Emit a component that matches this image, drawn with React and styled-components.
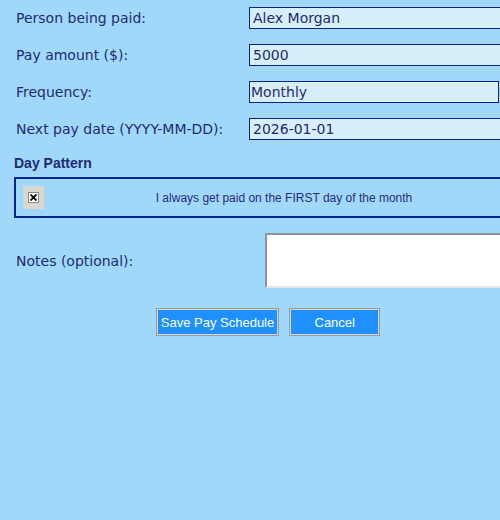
import React, { useState } from 'react';
import styled, { createGlobalStyle } from 'styled-components';

const GlobalStyle = createGlobalStyle`
  html, body {
    margin: 0;
    padding: 0;
    background: #a0d8fb;
    overflow: hidden;
  }
  body {
    width: 500px;
    height: 520px;
    font-family: "DejaVu Sans", sans-serif;
  }
`;

const Form = styled.form`
  width: 520px;
  margin-left: 8px;
  padding: 7px 6px 0 6px;
  box-sizing: border-box;
  display: flex;
  flex-direction: column;
`;

const Row = styled.div`
  display: grid;
  grid-template-columns: ${(p) => p.labelWidth || 235}px 1fr;
  align-items: center;
  margin-bottom: ${(p) => p.gap ?? 15}px;
`;

const Label = styled.label`
  padding-left: 2px;
  font-family: "DejaVu Sans", sans-serif;
  font-size: 14px;
  color: #1f2a72;
`;

const TextInput = styled.input`
  box-sizing: border-box;
  width: 100%;
  height: 22px;
  margin: 0;
  padding: 0 3px;
  border: 1px solid #0b2590;
  background: #d6effb;
  color: #1f2a72;
  font-family: "DejaVu Sans", sans-serif;
  font-size: 14px;
  outline: none;
`;

const Select = styled.select`
  box-sizing: border-box;
  width: 250px;
  height: 22px;
  margin: 0;
  padding: 0 1px;
  border: 1px solid #0b2590;
  background: #d6effb;
  color: #1f2a72;
  font-family: "DejaVu Sans", sans-serif;
  font-size: 14px;
  appearance: none;
  border-radius: 0;
  outline: none;
`;

const Heading = styled.h3`
  margin: 0 0 5px 0;
  font-family: "Liberation Sans", Arial, sans-serif;
  font-weight: bold;
  font-size: 14px;
  line-height: 18px;
  color: #1f2a72;
`;

const PatternBox = styled.div`
  display: flex;
  align-items: center;
  border: 2px solid #0b2590;
  padding: 7px 0;
  margin-bottom: 15px;
`;

const CheckWrap = styled.span`
  display: flex;
  align-items: center;
  justify-content: center;
  width: 21px;
  height: 23px;
  margin-left: 7px;
  margin-right: 4px;
  background: #d8d7d0;
  cursor: pointer;
`;

const CheckMark = styled.span`
  box-sizing: border-box;
  width: 11px;
  height: 11px;
  border: 1px solid #8a8a8a;
  background: #fff;
  display: flex;
  align-items: center;
  justify-content: center;
`;

const PatternText = styled.span`
  flex: 1;
  text-align: center;
  font-family: "Liberation Sans", Arial, sans-serif;
  font-size: 12px;
  color: #2a2a7a;
`;

const Notes = styled.textarea`
  box-sizing: border-box;
  width: 100%;
  height: 55px;
  margin: 0;
  border: 2px solid #e4e4e4;
  border-top-color: #929292;
  border-left-color: #929292;
  background: #fff;
  resize: none;
  outline: none;
`;

const Buttons = styled.div`
  display: flex;
  justify-content: center;
  gap: 10px;
  margin-top: 20px;
`;

const Button = styled.button`
  box-sizing: border-box;
  min-width: ${(p) => p.minWidth || 0}px;
  height: 28px;
  padding: 0 4px;
  border: 1px solid #9c9c9c;
  box-shadow: inset 0 0 0 1px #d4d4d4;
  background: #1e90ff;
  color: #fff;
  font-family: "Liberation Sans", Arial, sans-serif;
  font-size: 13px;
  cursor: pointer;
`;

export default function App() {
  const [firstDay, setFirstDay] = useState(true);

  return (
    <>
      <GlobalStyle />
      <Form onSubmit={(e) => e.preventDefault()}>
        <Row>
          <Label>Person being paid:</Label>
          <TextInput defaultValue="Alex Morgan" />
        </Row>
        <Row>
          <Label>Pay amount ($):</Label>
          <TextInput defaultValue="5000" />
        </Row>
        <Row>
          <Label>Frequency:</Label>
          <Select defaultValue="monthly">
            <option value="weekly">Weekly</option>
            <option value="biweekly">Biweekly</option>
            <option value="monthly">Monthly</option>
          </Select>
        </Row>
        <Row gap={14}>
          <Label>Next pay date (YYYY-MM-DD):</Label>
          <TextInput defaultValue="2026-01-01" />
        </Row>

        <Heading>Day Pattern</Heading>
        <PatternBox>
          <CheckWrap onClick={() => setFirstDay(!firstDay)}>
            <CheckMark>
              {firstDay ? (
                <svg width="7" height="7" viewBox="0 0 7 7">
                  <path d="M0.5 0.5 L6.5 6.5 M6.5 0.5 L0.5 6.5" stroke="#000" strokeWidth="1.8" />
                </svg>
              ) : null}
            </CheckMark>
          </CheckWrap>
          <PatternText>I always get paid on the FIRST day of the month</PatternText>
        </PatternBox>

        <Row labelWidth={251} gap={0}>
          <Label>Notes (optional):</Label>
          <Notes />
        </Row>

        <Buttons>
          <Button type="submit">Save Pay Schedule</Button>
          <Button type="button" minWidth={91}>Cancel</Button>
        </Buttons>
      </Form>
    </>
  );
}
